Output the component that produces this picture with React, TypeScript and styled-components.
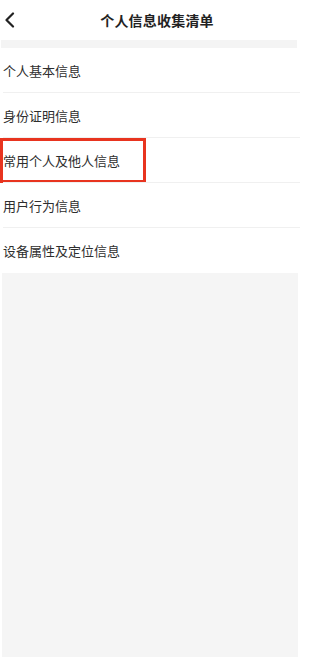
import React from "react";
import styled, { createGlobalStyle } from "styled-components";

const Global = createGlobalStyle`
  html, body { margin: 0; padding: 0; background: #ffffff; }
  body { font-family: "Noto Sans CJK SC", "Noto Sans", sans-serif; }
  * { box-sizing: border-box; }
`;

const Page = styled.div`
  width: 300px;
  height: 659px;
  display: flex;
  flex-direction: column;
  background: #ffffff;
  padding-bottom: 2px;
`;

const Header = styled.div`
  height: 40px;
  display: grid;
  grid-template-columns: 40px 1fr 26px;
  align-items: center;
`;

const BackButton = styled.button`
  border: none;
  background: none;
  padding: 0 0 0 4px;
  height: 40px;
  display: flex;
  align-items: center;
  cursor: pointer;
`;

const Title = styled.h1`
  margin: 0;
  font-size: 14px;
  font-weight: 700;
  color: #222222;
  text-align: center;
  line-height: 40px;
  letter-spacing: 0.2px;
`;

const Spacer = styled.div`
  height: 8px;
  margin: 0 3px 0 1px;
  background: #f4f4f4;
`;

const List = styled.ul`
  list-style: none;
  margin: 0;
  padding: 0;
`;

const Row = styled.li<{ $last?: boolean }>`
  position: relative;
  height: 45px;
  display: flex;
  align-items: center;
  padding-left: 3px;
  font-size: 13px;
  color: #2e2e2e;
  &::after {
    content: "";
    display: ${(p) => (p.$last ? "none" : "block")};
    position: absolute;
    left: 3px;
    right: 0;
    bottom: 0;
    height: 1px;
    background: #f0f0f0;
  }
`;

const Highlight = styled.span`
  position: absolute;
  left: 0;
  top: 0;
  width: 146px;
  height: 45px;
  border: 3px solid #e8341f;
  pointer-events: none;
`;

const Filler = styled.div`
  flex: 1;
  margin: 0 2px;
  background: #f5f5f5;
`;

const items = [
  "个人基本信息",
  "身份证明信息",
  "常用个人及他人信息",
  "用户行为信息",
  "设备属性及定位信息",
];

export default function App() {
  return (
    <Page>
      <Global />
      <Header>
        <BackButton aria-label="back">
          <svg width="12" height="16" viewBox="0 0 12 16">
            <path
              d="M9 1.5 L2.5 8 L9 14.5"
              fill="none"
              stroke="#222"
              strokeWidth="2.2"
              strokeLinecap="round"
              strokeLinejoin="round"
            />
          </svg>
        </BackButton>
        <Title>个人信息收集清单</Title>
        <div />
      </Header>
      <Spacer />
      <List>
        {items.map((t, i) => (
          <Row key={t} $last={i === items.length - 1}>
            {t}
            {i === 2 && <Highlight />}
          </Row>
        ))}
      </List>
      <Filler />
    </Page>
  );
}
